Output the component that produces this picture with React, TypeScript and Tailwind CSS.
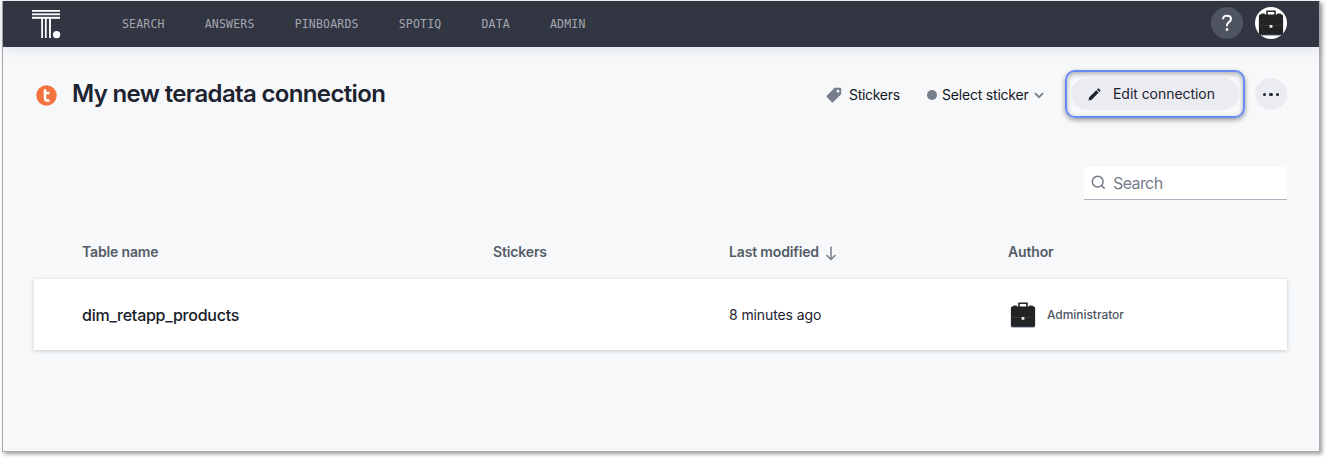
import React from "react";

const navItems = ["SEARCH", "ANSWERS", "PINBOARDS", "SPOTIQ", "DATA", "ADMIN"];

function Logo() {
  return (
    <svg width="29" height="29" viewBox="0 0 29 29" fill="#fff" className="block">
      <rect x="0" y="0" width="28" height="1.8" />
      <rect x="0" y="3.4" width="28" height="1.8" />
      <rect x="0" y="6.8" width="28" height="2" />
      <rect x="9.2" y="8" width="1.8" height="20" />
      <rect x="12.9" y="8" width="1.8" height="20" />
      <rect x="17" y="8" width="1.9" height="20" />
      <circle cx="24.6" cy="24.7" r="3.6" />
    </svg>
  );
}

function Briefcase() {
  return (
    <svg width="26" height="26" viewBox="0 0 26 26" className="block">
      <path d="M9 5V1.2h8V5" fill="none" stroke="#24272d" strokeWidth="1.6" />
      <rect x="3" y="3.5" width="4" height="2" rx="0.8" fill="#24272d" />
      <rect x="19" y="3.5" width="4" height="2" rx="0.8" fill="#24272d" />
      <rect x="0.9" y="4.5" width="24.2" height="20.6" rx="1.4" fill="#222325" />
      <path d="M1.2 14.8c6 1.4 17.6 1.4 23.6 0" fill="none" stroke="#3c3d40" strokeWidth="0.8" />
      <rect x="1.5" y="24.6" width="23" height="0.8" fill="#46506a" />
      <rect x="11.6" y="15" width="2.8" height="2.8" rx="0.6" fill="#f1f1f2" />
    </svg>
  );
}

export default function App() {
  return (
    <div className="h-[460px] w-[1326px] overflow-hidden bg-white pl-[2px] pt-px font-['Inter',sans-serif] text-[#1d232f]">
      <div className="flex h-[451px] w-[1318px] flex-col border-b border-l border-r border-[#a9abb0] bg-[#f6f8fa] shadow-[2px_2px_4px_rgba(0,0,0,0.4)]">
        <header className="flex h-[46px] shrink-0 items-center bg-[#323642] pl-[29px] pr-8 shadow-[0_1px_12px_rgba(40,45,60,0.13)]">
          <Logo />
          <nav className="ml-[61px] flex gap-10 font-['DejaVu_Sans_Mono',monospace] text-[11.5px] leading-4 tracking-[0.2px] text-[#a2a6b0]">
            {navItems.map((item) => (
              <a key={item}>{item}</a>
            ))}
          </nav>
          <div className="ml-auto flex items-center gap-3 pb-[2px]">
            <div className="flex size-8 items-center justify-center rounded-full bg-[#4e5560]">
              <svg width="12" height="18" viewBox="0 0 12 18" fill="none" stroke="#fff" strokeWidth="2">
                <path d="M2 5.2C2 2.8 3.6 1.7 6 1.7s4 1.2 4 3.3c0 3-4 2.9-4 6.2v1" />
                <path d="M6 14.2v2.6" strokeWidth="2.4" />
              </svg>
            </div>
            <div className="flex size-8 items-center justify-center overflow-hidden rounded-full bg-white">
              <Briefcase />
            </div>
          </div>
        </header>

        <main className="flex flex-col pl-[31px] pr-[32px]">
          <div className="mt-[23px] flex h-12 items-center">
            <svg width="21" height="21" viewBox="0 0 21 21" className="ml-[2px] mt-[3px]">
              <circle cx="10.5" cy="10.5" r="10.2" fill="#f37440" />
              <path d="M9 4.2v9c0 2.2 1.3 2.8 4.4 2.2M9 8h4.4" fill="none" stroke="#fff" strokeWidth="2.5" />
            </svg>
            <h1 className="ml-[15px] whitespace-nowrap text-[24px] font-semibold leading-8 tracking-[-0.65px]">My new teradata connection</h1>
            <div className="ml-auto flex items-center pt-px text-[14px] leading-5 text-[#14171e]">
              <svg width="16" height="16" viewBox="0 0 16 16" className="mr-[7px]">
                <path fillRule="evenodd" d="M8.5.8h5.7c.8 0 1 .3 1 1v5.4L7 15.2c-.5.4-.8.4-1.2 0L.8 10c-.5-.5-.4-.9 0-1.3zM12 2.8a1.4 1.4 0 1 0 0 2.8 1.4 1.4 0 0 0 0-2.8z" fill="#777e8b" />
              </svg>
              <span className="w-[52px] whitespace-nowrap tracking-[-0.3px]">Stickers</span>
              <span className="ml-[26px] size-[10px] rounded-full bg-[#777e8b]" />
              <span className="ml-[5px] w-[87px] whitespace-nowrap tracking-[-0.2px]">Select sticker</span>
              <svg width="10" height="7" viewBox="0 0 10 7" className="ml-[5px] mt-[2px]" fill="none" stroke="#777e8b" strokeWidth="1.7">
                <path d="M1 1.2 5 5.2l4-4" />
              </svg>
            </div>
            <div className="ml-[21px] flex h-12 w-[180px] items-center justify-center rounded-[10px] border-2 border-[#6889f8] shadow-[0_2px_5px_rgba(0,0,0,0.4),inset_0_2px_5px_rgba(0,0,0,0.3)]">
              <button className="flex h-8 w-[168px] items-center rounded-full bg-[#ebecf1] pl-[17px] text-[14px] leading-5">
                <svg width="13" height="13" viewBox="0 0 13 13" fill="#1d232f">
                  <path d="M1 9.5 8.3 2.2l2.4 2.4-7.3 7.3L.6 12.4zM9 1.5l.8-.8c.4-.4.8-.4 1.2 0l1.2 1.2c.4.4.4.8 0 1.2l-.8.8z" />
                </svg>
                <span className="ml-3 whitespace-nowrap tracking-[-0.05px]">Edit connection</span>
              </button>
            </div>
            <button className="ml-[10px] flex size-8 items-center justify-center gap-[3px] rounded-full bg-[#ebecf1] pt-px">
              <span className="size-[3.4px] rounded-full bg-[#1d232f]" />
              <span className="size-[3.4px] rounded-full bg-[#1d232f]" />
              <span className="size-[3.4px] rounded-full bg-[#1d232f]" />
            </button>
          </div>

          <div className="mt-[49px] flex h-[33px] w-[203px] items-center self-end rounded-t-[2px] border-b border-[#adb3c1] bg-white pb-px pl-[7px] text-[#757c89]">
            <svg width="15" height="15" viewBox="0 0 15 15" fill="none" stroke="currentColor" strokeWidth="1.5">
              <circle cx="6.7" cy="6.7" r="5.4" />
              <path d="m10.7 10.7 3 3" />
            </svg>
            <span className="ml-[7px] text-[16px] leading-6 tracking-[-0.6px]">Search</span>
          </div>

          <div className="mt-[42px] grid grid-cols-[411px_236px_279px_1fr] pl-12 text-[14px] font-semibold leading-5 tracking-[-0.15px] text-[#555c68]">
            <span>Table name</span>
            <span>Stickers</span>
            <span className="flex items-center whitespace-nowrap">
              Last modified
              <svg width="12" height="15" viewBox="0 0 12 15" className="ml-[6px] mt-[2px]" fill="none" stroke="#777e8b" strokeWidth="1.5">
                <path d="M6 .5v12.8M1.5 9 6 13.5 10.5 9" />
              </svg>
            </span>
            <span>Author</span>
          </div>

          <div className="mt-[17px] grid h-[71px] grid-cols-[411px_236px_279px_1fr] items-center bg-white pl-12 text-[14px] leading-5 shadow-[0_1px_4px_rgba(30,40,60,0.22)]">
            <span className="whitespace-nowrap text-[16px] font-medium tracking-[-0.25px] text-[#171c28]">dim_retapp_products</span>
            <span />
            <span className="whitespace-nowrap tracking-[-0.1px]">8 minutes ago</span>
            <span className="flex items-center pl-[2px]">
              <Briefcase />
              <span className="ml-[11px] text-[12px] font-medium tracking-[-0.05px] text-[#4e5562]">Administrator</span>
            </span>
          </div>
        </main>
      </div>
    </div>
  );
}
